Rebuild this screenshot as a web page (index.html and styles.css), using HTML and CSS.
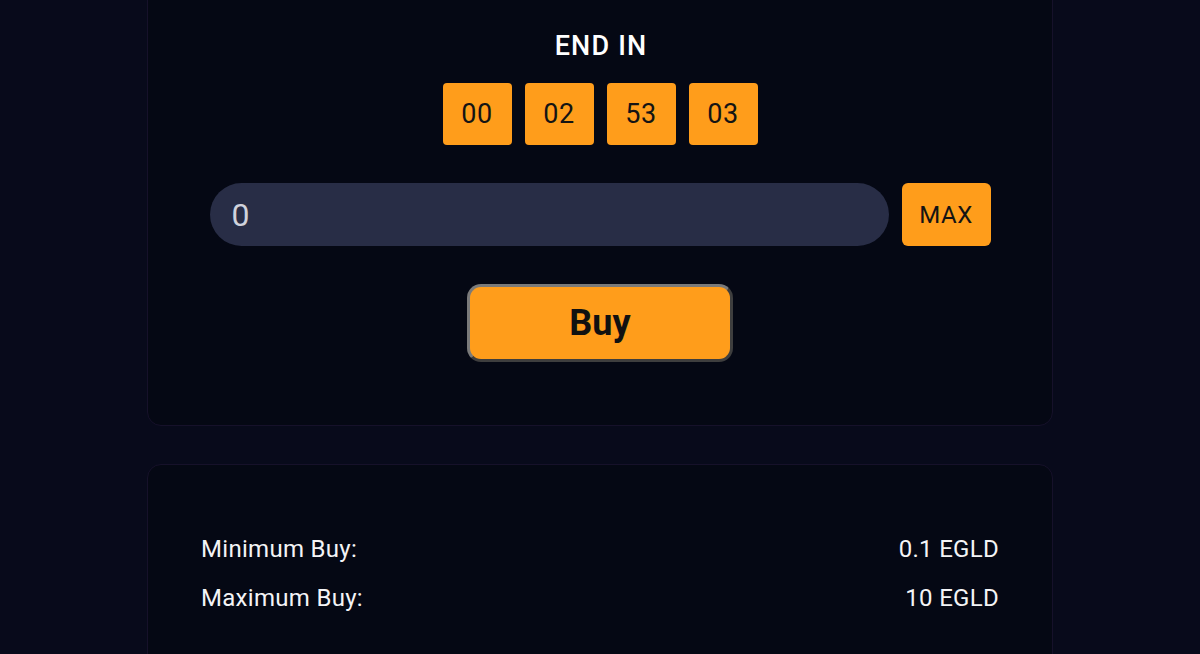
FILE: index.html
```html
<!DOCTYPE html>
<html>
<head>
<meta charset="utf-8">
<link rel="stylesheet" href="styles.css">
</head>
<body>
<main class="page">
  <section class="card card-sale">
    <h2 class="title">END IN</h2>
    <div class="timer">
      <div class="tbox">00</div>
      <div class="tbox">02</div>
      <div class="tbox">53</div>
      <div class="tbox">03</div>
    </div>
    <div class="amount-row">
      <div class="amount-input">0</div>
      <button class="max-btn">MAX</button>
    </div>
    <button class="buy-btn">Buy</button>
  </section>
  <section class="card card-info">
    <div class="info-row"><span>Minimum Buy:</span><span>0.1 EGLD</span></div>
    <div class="info-row"><span>Maximum Buy:</span><span>10 EGLD</span></div>
  </section>
</main>
</body>
</html>
```
FILE: styles.css
```css
html, body {
  margin: 0;
  padding: 0;
  background: #080a1b;
  font-family: Roboto, "Noto Sans", Arial, sans-serif;
  overflow: hidden;
}
.page {
  width: 906px;
  margin: -40px auto 0;
  display: flex;
  flex-direction: column;
  gap: 38px;
}
.card {
  background: #050814;
  border: 1px solid #16112a;
  border-radius: 14px;
  box-sizing: border-box;
}
.card-sale {
  padding: 70px 0 63px;
  display: flex;
  flex-direction: column;
  align-items: center;
}
.title {
  margin: 0 0 0 2px;
  color: #ffffff;
  font-size: 27px;
  font-weight: 500;
  line-height: 30px;
  letter-spacing: 1.2px;
}
.timer {
  margin-top: 22px;
  display: flex;
  gap: 13px;
}
.tbox {
  width: 69px;
  height: 62px;
  background: #ff9d1b;
  border-radius: 4px;
  color: #141414;
  font-size: 27px;
  letter-spacing: 0.6px;
  display: flex;
  align-items: center;
  justify-content: center;
}
.amount-row {
  margin-top: 38px;
  display: flex;
  gap: 13px;
  width: 781px;
}
.amount-input {
  flex: 1;
  height: 63px;
  background: #282d46;
  border-radius: 32px;
  color: #d0d2dc;
  font-size: 32px;
  display: flex;
  align-items: center;
  padding-left: 22px;
  box-sizing: border-box;
}
.max-btn {
  width: 89px;
  height: 63px;
  border: none;
  background: #ff9d1b;
  border-radius: 6px;
  color: #141414;
  font-family: inherit;
  font-size: 24px;
  letter-spacing: 0.5px;
  padding: 0;
}
.buy-btn {
  margin-top: 38px;
  width: 266px;
  height: 78px;
  background: #ff9d1b;
  border: 3px solid;
  border-color: #7a7a7a #3e3e3e #3e3e3e #7a7a7a;
  border-radius: 14px;
  color: #111111;
  font-family: inherit;
  font-size: 36px;
  font-weight: 700;
  padding: 0;
}
.card-info {
  padding: 70px 53px 60px;
  display: flex;
  flex-direction: column;
  gap: 21px;
  min-height: 260px;
}
.info-row {
  display: flex;
  justify-content: space-between;
  color: #f4f4f6;
  font-size: 24px;
  line-height: 28px;
  letter-spacing: 0.3px;
}
```
